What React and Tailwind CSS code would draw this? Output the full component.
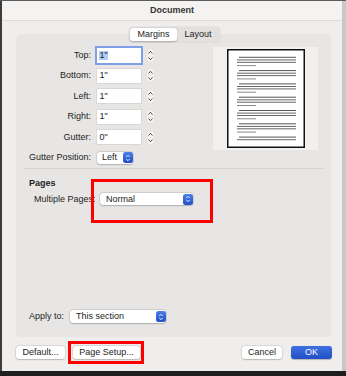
import React from "react";

const font = { fontFamily: '"Liberation Sans", Arial, sans-serif' };

const Stepper = () => (
  <svg width="9" height="15" viewBox="0 0 9 15" className="block">
    <rect x="0.5" y="0.5" width="8" height="14" rx="3" fill="#f3f2f1" stroke="#dcdad9" strokeWidth="0.6" />
    <path d="M2.5 5.5 L4.5 3.3 L6.5 5.5" fill="none" stroke="#3a3a3a" strokeWidth="0.9" />
    <path d="M2.5 9.5 L4.5 11.7 L6.5 9.5" fill="none" stroke="#3a3a3a" strokeWidth="0.9" />
  </svg>
);

const BlueKnob = () => (
  <div className="w-[10px] h-[11px] rounded-[2.5px] bg-gradient-to-b from-[#4c7ee8] to-[#2350c6] flex items-center justify-center">
    <svg width="6" height="8" viewBox="0 0 6 8" className="block">
      <path d="M1.3 3 L3 1.3 L4.7 3" fill="none" stroke="#fff" strokeWidth="0.9" />
      <path d="M1.3 5 L3 6.7 L4.7 5" fill="none" stroke="#fff" strokeWidth="0.9" />
    </svg>
  </div>
);

const Select = ({ className, text, pad }) => (
  <div
    className={`flex items-center justify-between h-[12px] bg-white rounded-[3px] shadow-[0_0_0_0.5px_rgba(0,0,0,0.14),0_0.5px_1.5px_rgba(0,0,0,0.18)] pr-[0.5px] ${className}`}
  >
    <span className={`${pad} text-[9px] leading-none text-[#1d1d1d] whitespace-nowrap`}>{text}</span>
    <BlueKnob />
  </div>
);

const Label = ({ children }) => (
  <div className="w-[62px] flex justify-end whitespace-nowrap text-[9px] leading-none text-[#1d1d1d]">
    {children}
  </div>
);

const Field = ({ label, value, focus }) => (
  <div className="flex items-center h-[14px]">
    <Label>{label}</Label>
    {focus ? (
      <div className="ml-[6px] w-[44px] h-[15px] bg-white ring-2 ring-[#7da0e6] flex items-center pl-[2px]">
        <span className="text-[9px] leading-none bg-[#b4cdf4] text-[#1d1d1d] px-[0.5px]">{value}</span>
      </div>
    ) : (
      <div className="ml-[6px] w-[44px] h-[14px] bg-white shadow-[0_0_0_0.5px_rgba(0,0,0,0.12)] flex items-center pl-[2.5px]">
        <span className="text-[9px] leading-none text-[#1d1d1d]">{value}</span>
      </div>
    )}
    <div className="ml-[5px]">
      <Stepper />
    </div>
  </div>
);

const PagePreview = () => {
  const groups = [];
  for (let g = 0; g < 7; g++) {
    const y = 8.3 + g * 13.3;
    groups.push(<line key={`a${g}`} x1="12" x2="69" y1={y} y2={y} stroke="#555" strokeWidth="1" />);
    groups.push(<line key={`b${g}`} x1="10" x2="69" y1={y + 2.6} y2={y + 2.6} stroke="#666" strokeWidth="1" />);
    if (g < 6) {
      groups.push(<line key={`c${g}`} x1="10" x2="69" y1={y + 5} y2={y + 5} stroke="#666" strokeWidth="1" />);
      groups.push(<line key={`d${g}`} x1="10" x2="29" y1={y + 8.3} y2={y + 8.3} stroke="#8a8a8a" strokeWidth="1" />);
    }
  }
  return (
    <div className="w-[105px] h-[103px] bg-[#f1f0ef] flex justify-center pt-[2px]">
      <svg width="78" height="99" viewBox="0 0 78 99" className="block">
        <rect x="0.75" y="0.75" width="76.5" height="97.5" fill="#fff" stroke="#111" strokeWidth="1.5" />
        {groups}
      </svg>
    </div>
  );
};

const Btn = ({ className, children }) => (
  <div
    className={`h-[13px] bg-white rounded-[3px] shadow-[0_0_0_0.5px_rgba(0,0,0,0.13),0_0.5px_1.5px_rgba(0,0,0,0.18)] flex items-center justify-center text-[9px] leading-none text-[#1d1d1d] whitespace-nowrap ${className}`}
  >
    {children}
  </div>
);

export default function App() {
  return (
    <div className="relative w-[346px] h-[376px] bg-[#1e1e1e] flex flex-col" style={font}>
      <div className="h-[1px] bg-[#5b5b5b]" />
      <div className="flex h-[370px]">
        <div className="w-[2px] bg-[#3c3c3c]" />
        <div className="w-[340px] bg-[#f0eeed] flex flex-col">
          <div className="h-[20px] bg-[#f5f3f2] border-b border-[#dddbda] flex items-center justify-center">
            <span className="text-[9px] font-bold leading-none text-[#333]">Document</span>
          </div>
          <div className="flex flex-col pl-[14px] pr-[11px]">
            <div className="relative z-10 mt-[6px] self-center ml-[2px] flex h-[15px] w-[91px] rounded-[4px] bg-[#e3e1e0] shadow-[0_0_0_0.5px_rgba(0,0,0,0.08)] p-[1px]">
              <div className="w-[47px] h-full bg-white rounded-[3px] shadow-[0_0.5px_1.5px_rgba(0,0,0,0.25)] flex items-center justify-center text-[9px] leading-none text-[#1d1d1d]">
                Margins
              </div>
              <div className="flex-1 flex items-center justify-center text-[9px] leading-none text-[#1d1d1d]">
                Layout
              </div>
            </div>
            <div className="-mt-[8px] h-[303px] bg-[#e8e6e5] rounded-[5px] flex flex-col">
              <div className="flex items-start justify-between pt-[13px] pl-[13px] pr-[13px]">
                <div className="mt-[1px] flex flex-col gap-[6.5px]">
                  <Field label="Top:" value={'1"'} focus />
                  <Field label="Bottom:" value={'1"'} />
                  <Field label="Left:" value={'1"'} />
                  <Field label="Right:" value={'1"'} />
                  <Field label="Gutter:" value={'0"'} />
                  <div className="flex items-center h-[14px]">
                    <Label>Gutter Position:</Label>
                    <Select className="ml-[6px] w-[36px]" text="Left" pad="pl-[5px]" />
                  </div>
                </div>
                <PagePreview />
              </div>
              <div className="mt-[3px] mx-[7px] h-px bg-[#d6d4d3]" />
              <div className="mt-[9px] pl-[13px] text-[9px] font-bold leading-[10px] text-[#1d1d1d]">Pages</div>
              <div className="mt-[5.5px] pl-[18px] flex items-center h-[12px]">
                <span className="w-[66px] text-[9px] leading-none text-[#1d1d1d] whitespace-nowrap">Multiple Pages:</span>
                <Select className="w-[93px]" text="Normal" pad="pl-[6px]" />
              </div>
              <div className="flex-1" />
              <div className="pl-[13px] pb-[14px] flex items-center h-[13px] box-content">
                <span className="w-[41px] text-[9px] leading-none text-[#1d1d1d] whitespace-nowrap">Apply to:</span>
                <Select className="w-[96px] h-[13px]" text="This section" pad="pl-[6px]" />
              </div>
            </div>
          </div>
          <div className="mt-[9px] pl-[14px] pr-[10px] flex items-center">
            <Btn className="w-[49px]">Default...</Btn>
            <Btn className="ml-[8px] w-[67px]">Page Setup...</Btn>
            <div className="flex-1" />
            <Btn className="w-[40px]">Cancel</Btn>
            <div className="ml-[9px] w-[41px] h-[13px] rounded-[3px] bg-gradient-to-b from-[#3f71e2] to-[#234fc3] shadow-[0_0.5px_1px_rgba(0,0,0,0.25)] flex items-center justify-center text-[9px] leading-none text-white">
              OK
            </div>
          </div>
        </div>
        <div className="w-[4px] bg-[#c8c8c8]" />
      </div>
      <div className="h-[5px] bg-[#1e1e1e]" />

      <div className="absolute left-[91px] top-[179px] w-[122px] h-[44px] border-[3px] border-[#ff0000]" />
      <div className="absolute left-[68px] top-[341px] w-[76px] h-[23px] border-[3px] border-[#ff0000]" />
    </div>
  );
}
